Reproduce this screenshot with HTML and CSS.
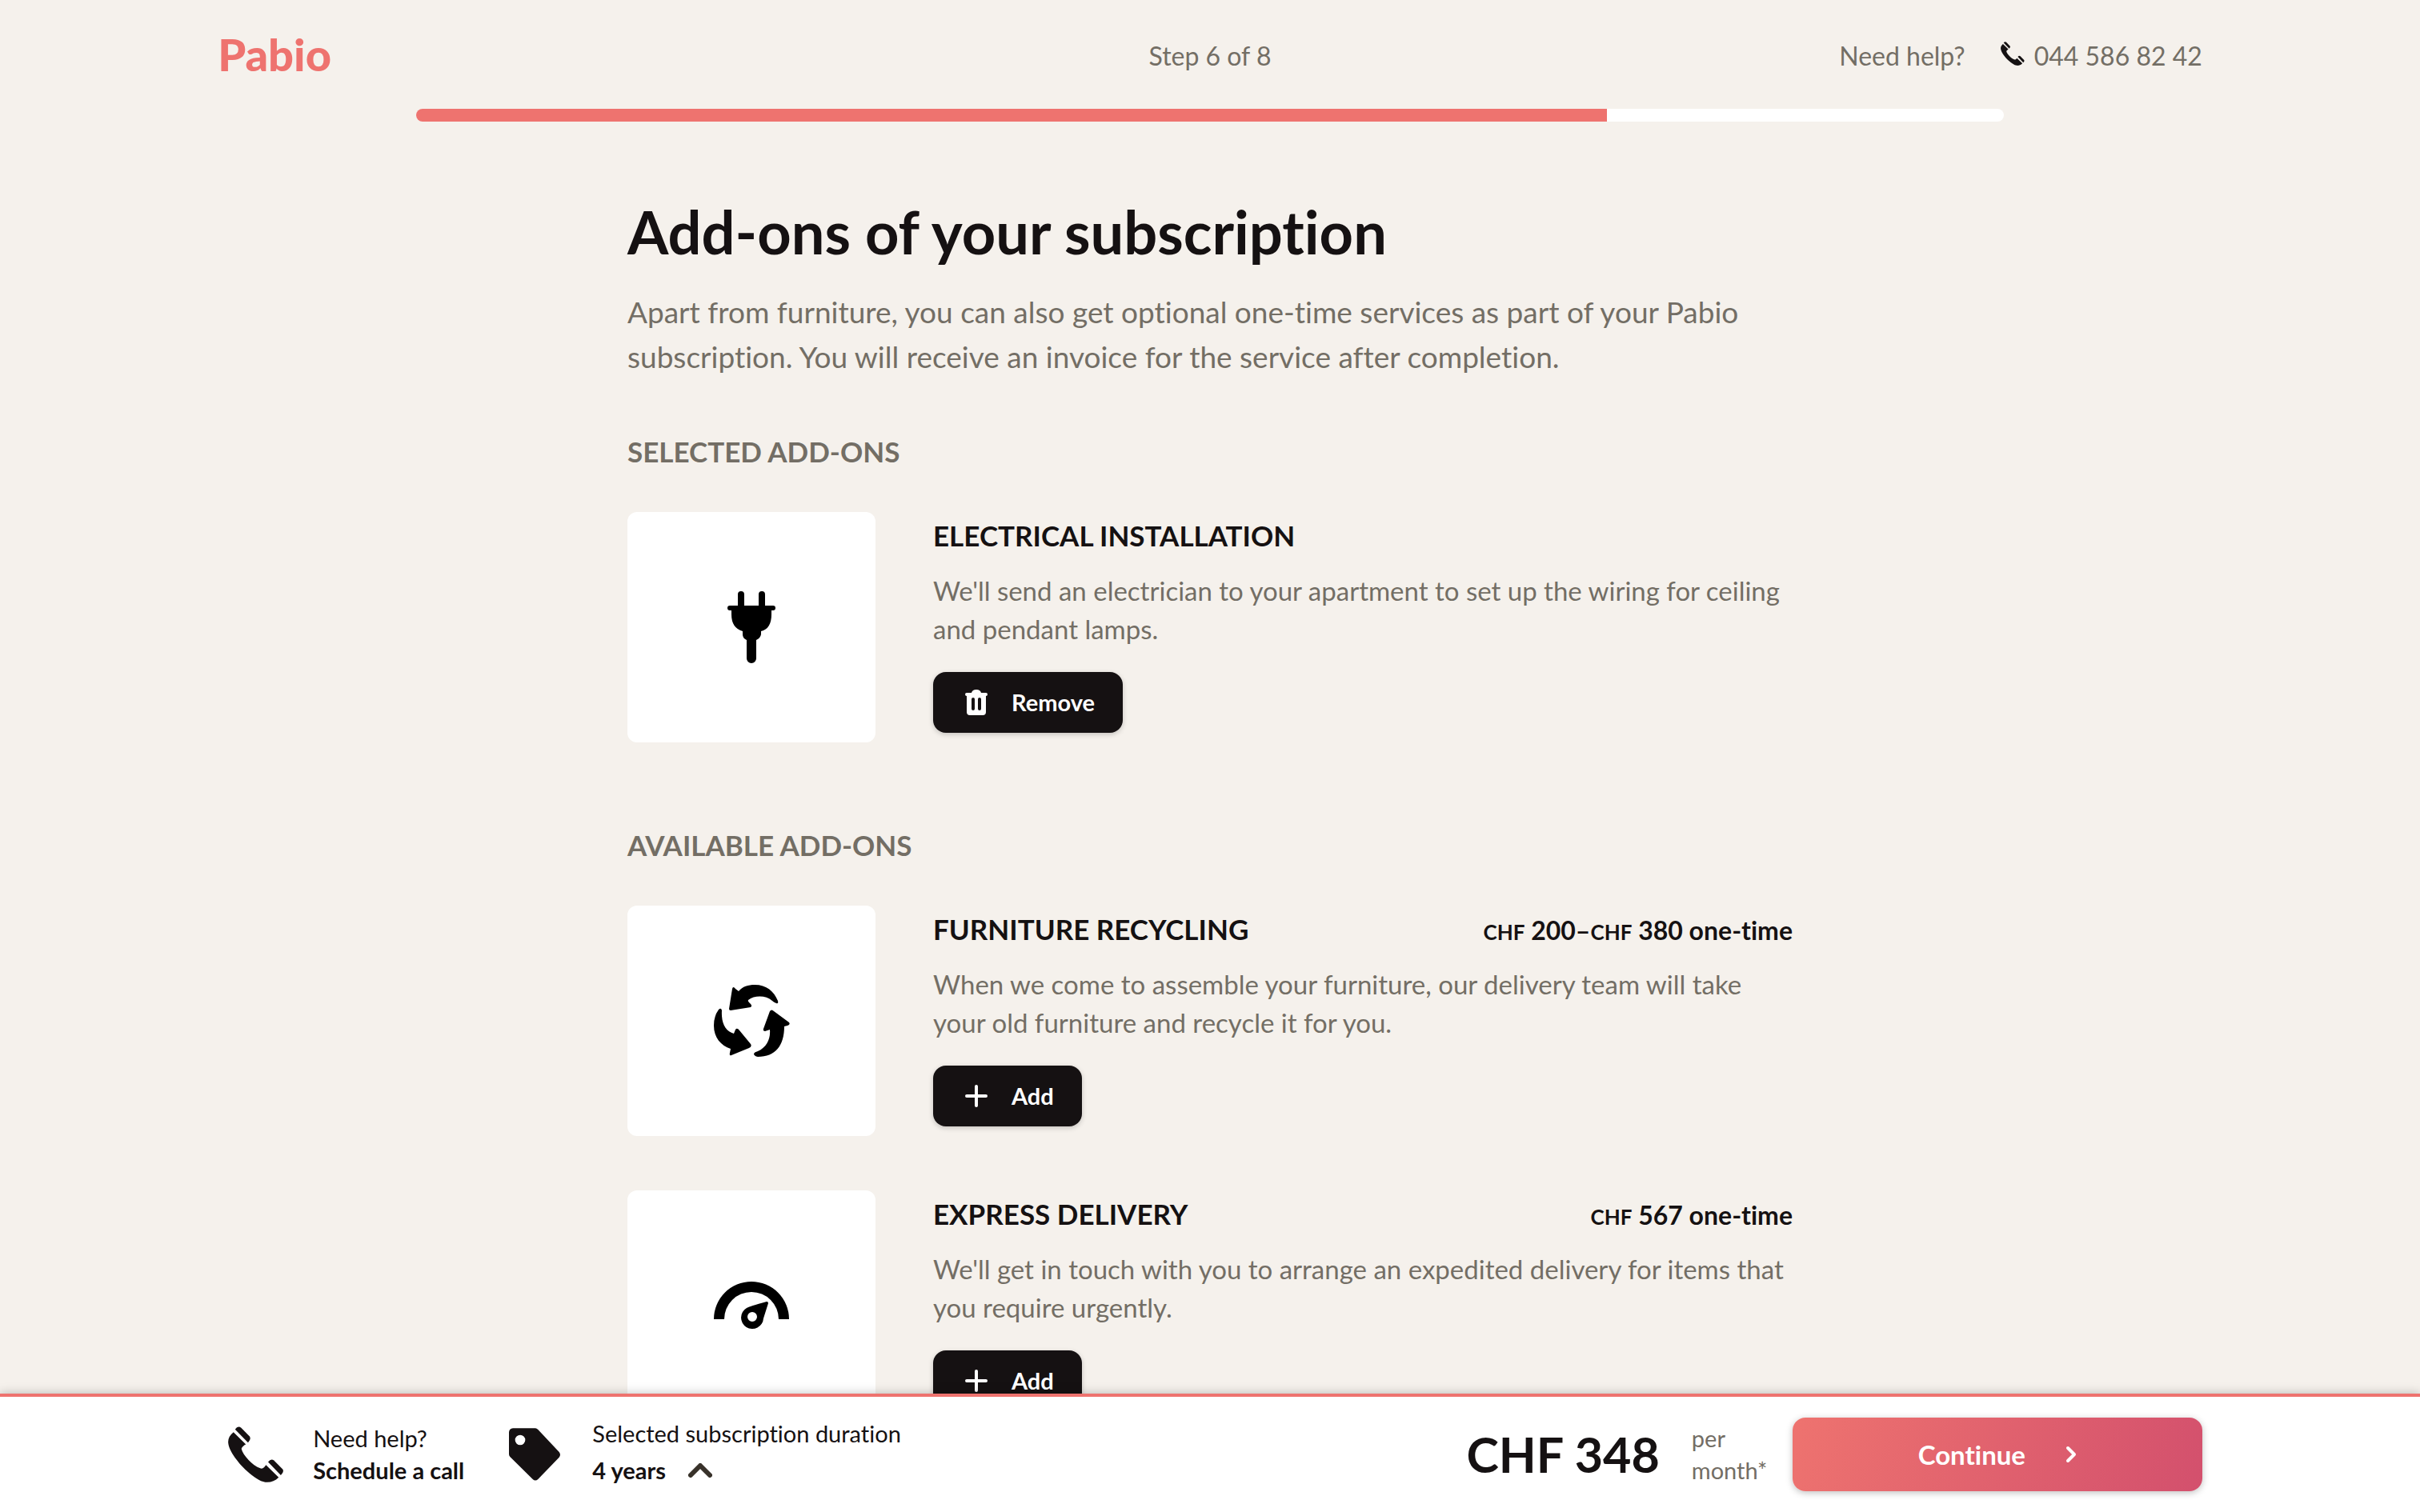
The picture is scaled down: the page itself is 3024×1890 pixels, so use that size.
FILE: index.html
```html
<!DOCTYPE html>
<html lang="en">
<head>
<meta charset="utf-8">
<meta name="viewport" content="width=device-width, initial-scale=1">
<title>Add-ons of your subscription – Pabio</title>
<link rel="stylesheet" href="styles.css">
</head>
<body>
<svg class="sprite" aria-hidden="true">
  <symbol id="phone" viewBox="135 157 211 212">
    <path d="M155 179C141 190 134 203 135 218C137 250 175 297 205 325C230 348 255 365 275 368C295 370 312 364 326 350L278 303L272 311Q267 318 258 316C240 310 225 298 212 284C198 270 188 255 185 242Q186 236 198 227L202 225Z"/>
    <path d="M161 168Q172 152 184 162L216 195Q223 205 210 218Z"/>
    <path d="M286 292Q297 277 308 286L341 319Q348 329 334 342Z"/>
  </symbol>
  <symbol id="plus" viewBox="0 0 28 28">
    <path d="M14 2V26M2 14H26" fill="none" stroke="currentColor" stroke-width="4" stroke-linecap="round"/>
  </symbol>
</svg>
<div class="app">
  <div class="page">
    <header class="header container">
      <a class="logo" href="#">Pabio</a>
      <p class="step">Step 6 of 8</p>
      <div class="contact">
        <span>Need help?</span>
        <a class="contact-link" href="tel:+41445868242"><svg class="icon-phone-small"><use href="#phone"/></svg>044 586 82 42</a>
      </div>
    </header>
    <div class="container">
      <div class="progress" role="progressbar" aria-label="Progress" aria-valuenow="6" aria-valuemin="0" aria-valuemax="8"><div class="progress-fill" style="width:75%"></div></div>
    </div>
    <main class="main">
      <h1 class="title">Add-ons of your subscription</h1>
      <p class="intro">Apart from furniture, you can also get optional one-time services as part of your Pabio subscription. You will receive an invoice for the service after completion.</p>

      <section class="section">
        <h2 class="section-title">Selected add-ons</h2>
        <article class="addon">
          <div class="addon-picture">
            <svg width="60" height="90" viewBox="909 739 60 90"><path d="M922 757V743a4 4 0 0 1 8 0V757H948V743a4 4 0 0 1 8 0V757H966a3 3 0 0 1 0 6H964V768Q964 786 951 789V793Q950 798 945 800V823a6 6 0 0 1-12 0V800Q928 798 928 793V789Q914 785 914 768V763H912a3 3 0 0 1 0-6Z"/></svg>
          </div>
          <div class="addon-body">
            <div class="addon-head"><h3 class="addon-title">Electrical installation</h3></div>
            <p class="addon-text">We'll send an electrician to your apartment to set up the wiring for ceiling and pendant lamps.</p>
            <button class="button" type="button"><svg width="28" height="32" viewBox="0 0 28 32"><path fill-rule="evenodd" d="M2 4H8Q9 0 14 0T20 4H26a2 2 0 0 1 0 4V28Q26 32 22 32H6Q2 32 2 28V8a2 2 0 0 1 0-4ZM8 12V24a2 2 0 0 0 4 0V12a2 2 0 0 0-4 0ZM16 12V24a2 2 0 0 0 4 0V12a2 2 0 0 0-4 0Z"/></svg>Remove</button>
          </div>
        </article>
      </section>

      <section class="section">
        <h2 class="section-title">Available add-ons</h2>
        <article class="addon">
          <div class="addon-picture">
            <svg width="97" height="92" viewBox="111 110 97 92"><path d="M192 131Q193 135 190 134Q187 133 185 131C177 124 163 124 155 130Q154 131 156 133Q161 137 158 139L133 143Q131 143 131 141L135 116Q136 112 139 116L143 119C148 113 155 111 163 111C178 111 187 119 192 131Z"/><path d="M118 142Q121 139 122 143C121 160 127 169 137 172L139 167Q141 164 144 168L158 185Q160 188 156 190L134 199Q131 200 132 196L133 191C121 187 112 177 112 162Q112 150 118 142Z"/><path d="M182 144Q184 141 187 144L206 158Q208 161 204 162L200 163C200 187 189 201 167 201Q162 200 162 197Q163 195 167 194C178 189 183 179 182 167L176 169Q173 169 174 166Z"/></svg>
          </div>
          <div class="addon-body">
            <div class="addon-head"><h3 class="addon-title">Furniture recycling</h3><p class="addon-price"><small>CHF</small> 200–<small>CHF</small> 380 one-time</p></div>
            <p class="addon-text">When we come to assemble your furniture, our delivery team will take your old furniture and recycle it for you.</p>
            <button class="button" type="button"><svg width="28" height="28"><use href="#plus"/></svg>Add</button>
          </div>
        </article>
        <article class="addon">
          <div class="addon-picture">
            <svg width="94" height="60" viewBox="112 123 94 60"><path d="M112 170A47 47 0 0 1 206 170H193A34 34 0 0 0 125 170Z"/><path fill-rule="evenodd" d="M178 148Q180 148 180 150L174 169A14 14 0 1 1 153 156Q156 154 178 148ZM166 167a6 6 0 1 0-12 0a6 6 0 1 0 12 0Z"/></svg>
          </div>
          <div class="addon-body">
            <div class="addon-head"><h3 class="addon-title">Express delivery</h3><p class="addon-price"><small>CHF</small> 567 one-time</p></div>
            <p class="addon-text">We'll get in touch with you to arrange an expedited delivery for items that you require urgently.</p>
            <button class="button" type="button"><svg width="28" height="28"><use href="#plus"/></svg>Add</button>
          </div>
        </article>
      </section>
    </main>
  </div>

  <footer class="footer">
    <div class="footer-inner container">
      <a class="help" href="#">
        <svg class="icon-phone"><use href="#phone"/></svg>
        <span>Need help?<br><strong>Schedule a call</strong></span>
      </a>
      <div class="duration">
        <svg width="64" height="66" viewBox="1185 162 192 198"><path fill-rule="evenodd" d="M1200 163H1284Q1289 163 1294 168L1373 252Q1381 262 1373 272L1294 354Q1284 363 1274 354L1189 270Q1185 265 1185 260V178Q1186 164 1200 163ZM1246 207a19 19 0 1 0-38 0a19 19 0 1 0 38 0Z"/></svg>
        <div class="duration-body">
          <p id="duration-label">Selected subscription duration</p>
          <button class="duration-button" type="button" aria-describedby="duration-label">4 years<svg width="30" height="18" viewBox="0 0 30 18"><path d="M3 15L15 3L27 15" fill="none" stroke="#38322a" stroke-width="6" stroke-linecap="round" stroke-linejoin="round"/></svg></button>
        </div>
      </div>
      <p class="total">CHF 348</p>
      <p class="period">per month*</p>
      <button class="continue" type="button">Continue<svg width="14" height="22" viewBox="0 0 14 22"><path d="M3 3L11 11L3 19" fill="none" stroke="currentColor" stroke-width="4" stroke-linecap="round" stroke-linejoin="round"/></svg></button>
    </div>
  </footer>
</div>
</body>
</html>
```
FILE: styles.css
```css
* { box-sizing: border-box; }

body {
  margin: 0;
  background: #f5f1ec;
  color: #151112;
  font-family: Lato, "Liberation Sans", sans-serif;
  font-size: 33px;
  font-variant-ligatures: none;
  line-height: 48px;
}

h1, h2, h3, p { margin: 0; }
a { color: inherit; text-decoration: none; }
button { font: inherit; font-variant-ligatures: none; color: inherit; border: 0; cursor: pointer; }
svg { display: block; flex: none; fill: currentColor; }
.sprite { position: absolute; width: 0; height: 0; }

.app { display: flex; flex-direction: column; height: 100vh; }
.page { flex: 1; min-height: 0; overflow-y: auto; scrollbar-width: none; }
.container { width: 82%; margin: 0 auto; }

.header {
  display: grid;
  grid-template-columns: 1fr auto 1fr;
  align-items: center;
  height: 136px;
  padding-top: 4px;
  color: #736e65;
  font-size: 32px;
}
.logo { padding-bottom: 4px; color: #ee736f; font-size: 56px; font-weight: 900; }
.contact { display: flex; justify-content: flex-end; gap: 44px; }
.contact-link { display: flex; gap: 12px; }
.icon-phone-small { width: 30px; height: 30px; margin-top: 6px; color: #151112; }

.progress { width: 80%; height: 16px; margin: 0 auto; border-radius: 8px; background: #fff; overflow: hidden; }
.progress-fill { height: 100%; background: #ee736f; }

.main { max-width: 1456px; margin: 0 auto; padding: 90px 0 100px; }
.title { font-size: 74px; line-height: 96px; font-weight: 700; }
.intro { margin-top: 24px; color: #736e65; font-size: 37px; line-height: 56px; }

.section { padding-top: 64px; }
.section + .section { padding-top: 102px; }
.section-title { margin-bottom: 50px; color: #736e65; font-size: 35px; line-height: 52px; font-weight: 700; text-transform: uppercase; }

.addon { display: grid; grid-template-columns: 310px 1fr; gap: 72px; }
.addon + .addon { margin-top: 68px; }
.addon-picture { display: flex; align-items: center; justify-content: center; height: 288px; border-radius: 12px; background: #fff; color: #000; }
.addon-head { display: flex; justify-content: space-between; align-items: baseline; margin: 3px 0 19px; }
.addon-title { font-size: 35px; line-height: 52px; font-weight: 700; text-transform: uppercase; }
.addon-price { font-size: 32px; line-height: 40px; font-weight: 700; }
.addon-price small { font-size: 26px; }
.addon-text { color: #736e65; }
.button {
  display: flex;
  align-items: center;
  gap: 30px;
  height: 76px;
  margin-top: 30px;
  padding: 0 35px 0 40px;
  border-radius: 16px;
  background: #151112;
  color: #fff;
  font-size: 29px;
  font-weight: 700;
  box-shadow: 0 2px 6px rgba(0, 0, 0, 0.2);
}

.footer { position: relative; border-top: 4px solid #ee736f; background: #fff; box-shadow: 0 0 12px rgba(0, 0, 0, 0.25); font-size: 29px; line-height: 40px; }
.footer-inner { display: flex; align-items: center; height: 144px; }
.help { display: flex; align-items: center; gap: 36px; margin-left: 13px; }
.icon-phone { width: 70px; height: 70px; }
.duration { display: flex; align-items: center; gap: 40px; margin-left: 56px; }
.duration-body { padding-bottom: 6px; }
.duration-button { display: flex; align-items: center; gap: 28px; margin-top: 6px; padding: 0; background: none; font-weight: 700; }
.total { margin-left: auto; font-size: 61px; line-height: 72px; font-weight: 700; }
.period { width: 126px; margin-left: 40px; color: #736e65; }
.continue {
  display: flex;
  align-items: center;
  justify-content: center;
  gap: 50px;
  width: 512px;
  height: 92px;
  border-radius: 16px;
  background: linear-gradient(110deg, #ee736f, #d3506d);
  color: #fff;
  font-size: 33px;
  font-weight: 700;
  box-shadow: 0 2px 8px rgba(0, 0, 0, 0.25);
}
```
